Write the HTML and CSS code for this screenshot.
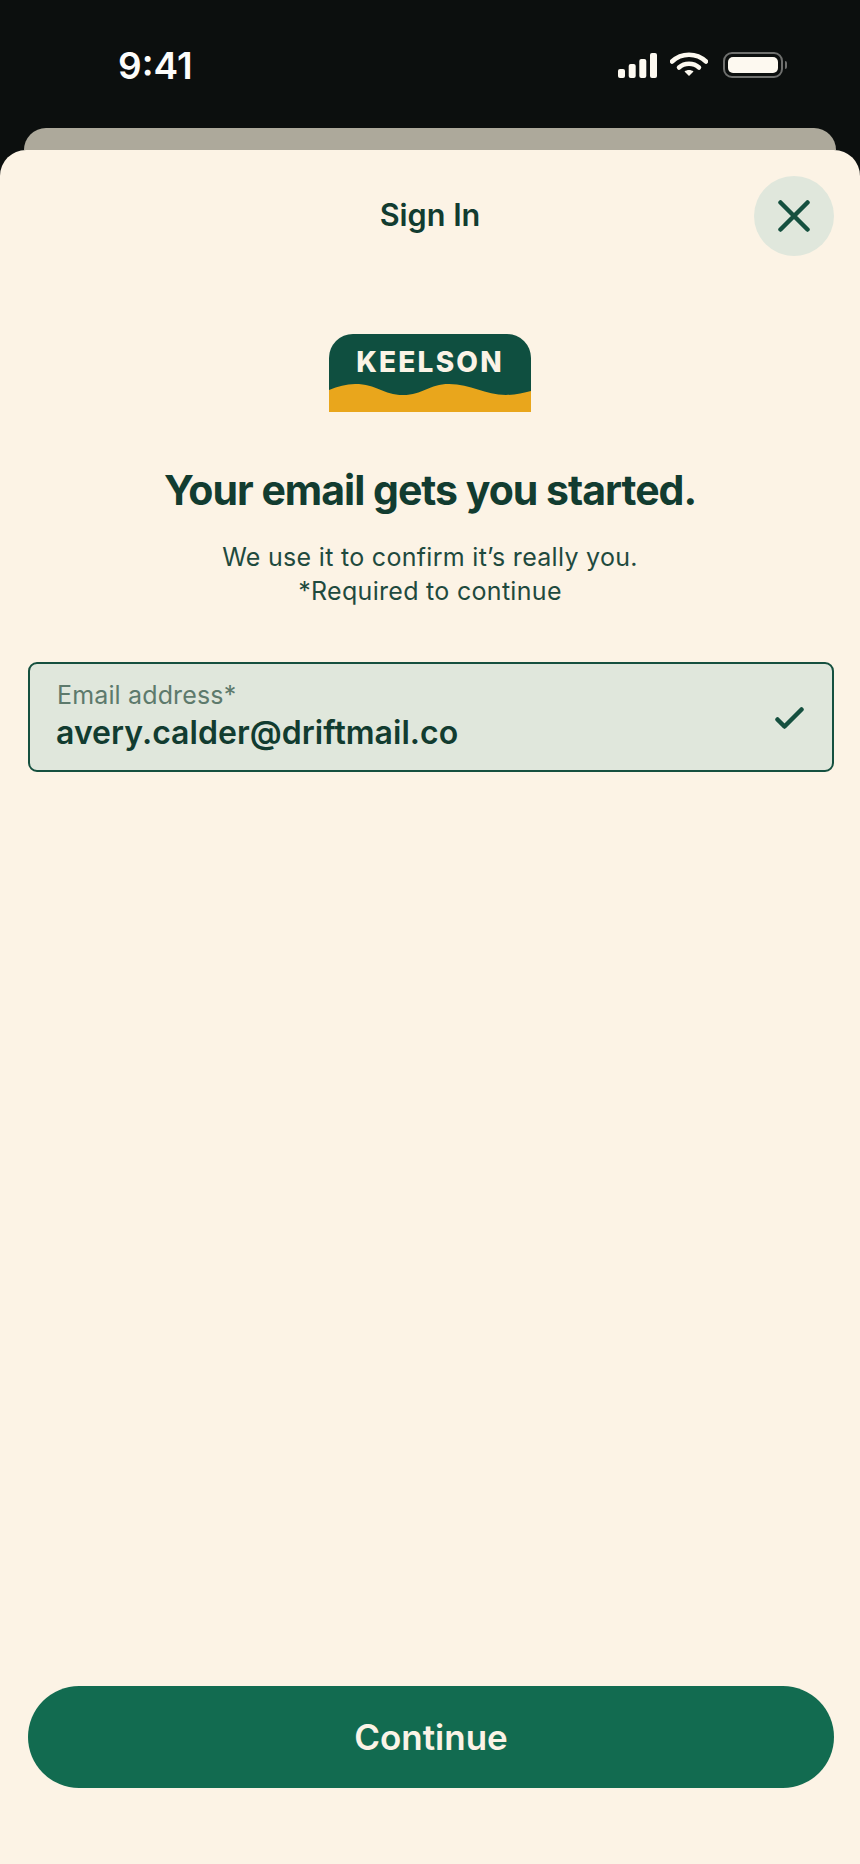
FILE: index.html
```html
<!DOCTYPE html>
<html lang="en">
<head>
<meta charset="utf-8">
<title>Sign In</title>
<link rel="stylesheet" href="styles.css">
</head>
<body>
<div class="screen">
  <header class="status">
    <span class="time">9:41</span>
    <div class="status-icons">
      <svg class="signal" width="39" height="25" viewBox="0 0 39 25"><rect x="0" y="16" width="7" height="9" rx="2"/><rect x="10.700" y="11" width="7" height="14" rx="2"/><rect x="21.300" y="6" width="7" height="19" rx="2"/><rect x="32" y="0" width="7" height="25" rx="2"/></svg>
      <svg class="wifi" width="38" height="24" viewBox="0 0 38 24"><path class="wifi-arc" d="M2 9.500C11.500 .5 26.500 .5 36 9.500"/><path class="wifi-arc" d="M9 15.500C14.500 10.500 23.500 10.500 29 15.500"/><path class="wifi-dot" d="M14.500 19.500C17 17.500 21 17.500 23.500 19.500L19 24Z"/></svg>
      <div class="battery"><div class="battery-fill"></div></div>
      <div class="battery-cap"></div>
    </div>
  </header>
  <div class="peek"></div>
  <main class="sheet">
    <div class="sheet-head">
      <h2 class="sheet-title">Sign In</h2>
      <button class="close" aria-label="Close">
        <svg width="32" height="32" viewBox="0 0 32 32"><path d="M2.500 2.500L29.500 29.500M29.500 2.500L2.500 29.500"/></svg>
      </button>
    </div>
    <div class="logo">
      <span class="logo-word">KEELSON</span>
      <svg class="logo-wave" width="202" height="28" viewBox="0 0 202 28" preserveAspectRatio="none"><path d="M0 6C9 2.500 17 0 26 0C48 0 54 11 74 11C94 11 100 0 120 0C142 0 156 11 177 11C186 11 195 9 202 7V28H0Z"/></svg>
    </div>
    <h1 class="headline">Your email gets you started.</h1>
    <p class="sub">We use it to confirm it’s really you.<br>*Required to continue</p>
    <div class="field">
      <div class="field-text">
        <label class="field-label">Email address*</label>
        <span class="field-value">avery.calder@driftmail.co</span>
      </div>
      <svg class="check" width="29" height="22" viewBox="0 0 29 22"><path d="M2.500 12.500L9.500 19.500L26.500 2.500"/></svg>
    </div>
    <button class="continue">Continue</button>
  </main>
</div>
</body>
</html>
```
FILE: styles.css
```css
* { box-sizing: border-box; }
html, body { margin: 0; padding: 0; }
body { background: #0c0f0e; font-family: Inter, "Liberation Sans", sans-serif; }
.screen { width: 860px; height: 1864px; display: flex; flex-direction: column; background: #0c0f0e; overflow: hidden; }
.status { height: 128px; flex: none; display: flex; justify-content: space-between; align-items: flex-start; padding: 44px 73px 0 118px; color: #fff; }
.time { font-size: 37px; font-weight: 600; line-height: 44px; color: #fdfdfb; }
.status-icons { display: flex; align-items: center; margin-top: 8px; }
.signal { fill: #fdf9f0; margin-right: 13px; }
.wifi { margin-right: 15px; margin-top: -2px; }
.wifi-arc { fill: none; stroke: #fdf9f0; stroke-width: 4.500; stroke-linecap: round; }
.wifi-dot { fill: #fdf9f0; }
.battery { width: 60px; height: 26px; border: 2px solid #6f706e; border-radius: 9px; padding: 3px; }
.battery-fill { width: 100%; height: 100%; background: #fdf9f0; border-radius: 5px; }
.battery-cap { width: 2px; height: 8px; background: #6f706e; margin-left: 2px; border-radius: 0 2px 2px 0; }
.peek { height: 22px; flex: none; margin: 0 24px; background: #ada99b; border-radius: 24px 24px 0 0; }
.sheet { flex: 1; background: #fcf3e5; border-radius: 26px 26px 0 0; display: flex; flex-direction: column; align-items: center; padding: 26px 28px 76px; }
.sheet-head { width: 100%; display: grid; grid-template-columns: 1fr auto 1fr; align-items: center; }
.sheet-title { grid-column: 2; margin: 0; font-size: 30.600px; line-height: 40px; font-weight: 600; color: #123c30; position: relative; top: -1px; }
.close { grid-column: 3; justify-self: end; width: 80px; height: 80px; margin-right: -2px; padding: 0; border: 0; border-radius: 50%; background: #e0e7dc; display: flex; align-items: center; justify-content: center; }
.close path { fill: none; stroke: #15503f; stroke-width: 4.500; stroke-linecap: round; }
.logo { width: 202px; height: 78px; margin-top: 78px; background: #0f4f40; border-radius: 24px 24px 0 0; display: flex; flex-direction: column; align-items: center; justify-content: space-between; overflow: hidden; }
.logo-word { font-size: 28px; line-height: 34px; font-weight: 800; letter-spacing: 2.200px; color: #fbf3e6; margin-top: 11px; }
.logo-wave { display: block; fill: #e9a61c; }
.headline { margin: 53px 0 0; font-size: 41px; line-height: 50px; font-weight: 700; letter-spacing: -1px; color: #123c30; white-space: nowrap; }
.sub { margin: 25px 0 0; font-size: 25px; line-height: 34px; font-weight: 400; letter-spacing: 0.300px; text-align: center; color: #1f4a3e; }
.field { width: 806px; height: 110px; margin-top: 54px; padding: 16px 28px 0 27px; align-self: flex-start; background: #e0e7dc; border: 2px solid #15503f; border-radius: 9px; display: flex; justify-content: space-between; align-items: flex-start; flex: none; }
.field-text { display: flex; flex-direction: column; }
.field-label { font-size: 25px; line-height: 31px; color: #5d7a6c; letter-spacing: 0.150px; }
.field-value { font-size: 32px; line-height: 40px; margin-top: 2px; font-weight: 600; color: #123c30; letter-spacing: 0.040px; margin-left: -1px; }
.check { margin-top: 27px; }
.check path { fill: none; stroke: #15503f; stroke-width: 4.500; stroke-linecap: round; stroke-linejoin: round; }
.continue { width: 806px; height: 102px; margin-top: auto; align-self: flex-start; border: 0; border-radius: 51px; background: #126b50; color: #fbf3e6; font-family: inherit; font-size: 35px; font-weight: 600; flex: none; }
```
